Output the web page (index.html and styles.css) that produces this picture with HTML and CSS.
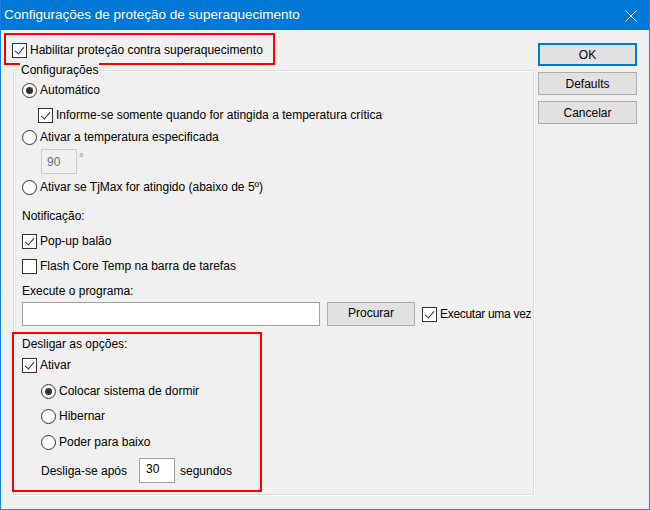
FILE: index.html
```html
<!DOCTYPE html>
<html>

<head>
    <meta charset="utf-8">
    <title>Configurações de proteção de superaquecimento</title>
    <meta name="viewport" content="width=device-width, initial-scale=1">
    <link rel="stylesheet" href="styles.css">
</head>

<body>
    <div class="window">
        <div class="titlebar">
            <span class="title-text">Configurações de proteção de superaquecimento</span>
            <svg class="close-icon" width="12" height="12" viewBox="0 0 12 12">
                <path d="M0.5 0.5 L11.5 11.5 M11.5 0.5 L0.5 11.5" stroke="#fff" stroke-width="1" />
            </svg>
        </div>

        <div class="content">
            <div class="left-col">
                <!-- main switch -->
                <div class="mark-box enable-box">
                    <label class="opt">
                        <span class="check on"></span>
                        Habilitar proteção contra superaquecimento
                    </label>
                </div>

                <div class="group">
                    <div class="group-title">Configurações</div>

                    <div class="row r-auto">
                        <span class="radio on"></span>Automático
                    </div>
                    <div class="row r-inform indent1">
                        <span class="check on"></span>Informe-se somente quando for atingida a temperatura crítica
                    </div>
                    <div class="row r-temp">
                        <span class="radio"></span>Ativar a temperatura especificada
                    </div>
                    <div class="row r-ninety indent2">
                        <span class="num-box disabled">90</span><span class="deg">°</span>
                    </div>
                    <div class="row r-tjmax">
                        <span class="radio"></span>Ativar se TjMax for atingido (abaixo de 5º)
                    </div>

                    <div class="row r-notif">Notificação:</div>
                    <div class="row r-popup">
                        <span class="check on"></span>Pop-up balão
                    </div>
                    <div class="row r-flash">
                        <span class="check"></span>Flash Core Temp na barra de tarefas
                    </div>

                    <div class="row r-exec">Execute o programa:</div>
                    <div class="row r-prog">
                        <span class="text-input"></span>
                        <span class="btn browse">Procurar</span>
                        <span class="check on"></span><span class="run-once">Executar uma vez</span>
                    </div>

                    <!-- shutdown options -->
                    <div class="mark-box shutdown-box">
                        <div class="row r-desl">Desligar as opções:</div>
                        <div class="row r-ativar">
                            <span class="check on"></span>Ativar
                        </div>
                        <div class="row r-sleep indent2">
                            <span class="radio on"></span>Colocar sistema de dormir
                        </div>
                        <div class="row r-hib indent2">
                            <span class="radio"></span>Hibernar
                        </div>
                        <div class="row r-power indent2">
                            <span class="radio"></span>Poder para baixo
                        </div>
                        <div class="row r-after indent2">
                            <span class="after-label">Desliga-se após</span>
                            <span class="num-box">30</span>
                            <span class="after-unit">segundos</span>
                        </div>
                    </div>
                </div>
            </div>

            <div class="right-col">
                <div class="btn side default">OK</div>
                <div class="btn side">Defaults</div>
                <div class="btn side">Cancelar</div>
            </div>
        </div>
    </div>
</body>

</html>
```

FILE: styles.css
```css
body {
    margin: 0;
    font-family: 'Liberation Sans', Arial, sans-serif;
    font-size: 12px;
    color: #000000;
}

.window {
    width: 650px;
    height: 510px;
    box-sizing: border-box;
    border: 1px solid #1883d7;
    border-top: none;
    background-color: #f0f0f0;
    overflow: hidden;
}

.titlebar {
    height: 30px;
    margin: 0 -1px;
    background-color: #0078d7;
    color: #ffffff;
    display: flex;
    align-items: center;
    justify-content: space-between;
    padding: 0 13px 0 4px;
}

.title-text {
    font-size: 13.5px;
    padding-bottom: 1px;
}

.close-icon {
    display: block;
    margin-top: 1px;
}

.content {
    display: flex;
    padding-left: 3px;
}

.left-col {
    width: 530px;
}

.mark-box {
    border: 2px solid #ff0000;
    box-sizing: border-box;
}

.enable-box {
    width: 271px;
    height: 32px;
    margin-top: 3px;
    padding: 2px 0 0 6px;
    display: flex;
    align-items: center;
}

.opt {
    display: flex;
    align-items: center;
}

/* group box */
.group {
    width: 521px;
    box-sizing: border-box;
    margin: 5px 0 0 9px;
    height: 425px;
    border: 1px solid #dcdcdc;
    box-shadow: inset 1px 1px 0 #ffffff, 1px 1px 0 #ffffff;
    padding-left: 8px;
}

.group-title {
    width: fit-content;
    height: 14px;
    line-height: 14px;
    margin: -8px 0 0 -2px;
    padding: 0 1px;
    background-color: #f0f0f0;
}

.row {
    display: flex;
    align-items: center;
    white-space: nowrap;
}

.indent1 {
    padding-left: 16px;
}

.indent2 {
    padding-left: 19px;
}

.r-auto { height: 22px; margin-top: 2px; }
.r-inform { height: 28px; }
.r-temp { height: 16px; }
.r-ninety { height: 25px; margin-top: 4px; }
.r-tjmax { height: 26px; }
.r-notif { height: 32px; }
.r-popup { height: 18px; }
.r-flash { height: 32px; }
.r-exec { height: 18px; }
.r-prog { height: 24px; margin-top: 2px; }
.r-desl { height: 20px; }
.r-ativar { height: 22px; }
.r-sleep { height: 30px; }
.r-hib { height: 20px; }
.r-power { height: 32px; }
.r-after { height: 25px; }

.run-once {
    letter-spacing: -0.3px;
}

.shutdown-box {
    width: 250px;
    height: 160px;
    margin: 6px 0 0 -10px;
    padding-left: 8px;
}

/* check boxes and radios */
.check {
    width: 13px;
    height: 13px;
    border: 1px solid #333333;
    background-color: #ffffff;
    margin-right: 3px;
    flex-shrink: 0;
    position: relative;
}

.check.on::after {
    content: "";
    position: absolute;
    left: 4px;
    top: 1px;
    width: 4px;
    height: 8px;
    border: solid #333333;
    border-width: 0 1px 1px 0;
    transform: rotate(40deg);
}

.radio {
    width: 13px;
    height: 13px;
    border: 1px solid #333333;
    border-radius: 50%;
    background-color: #ffffff;
    margin-right: 3px;
    flex-shrink: 0;
    display: flex;
    align-items: center;
    justify-content: center;
}

.radio.on::after {
    content: "";
    width: 7px;
    height: 7px;
    border-radius: 50%;
    background-color: #333333;
}

.num-box {
    width: 36px;
    height: 25px;
    box-sizing: border-box;
    border: 1px solid #a0a0a0;
    background-color: #ffffff;
    padding: 3px 0 0 6px;
    align-self: flex-start;
    flex-shrink: 0;
}

.num-box.disabled {
    background-color: #f0f0f0;
    border-color: #cccccc;
    color: #6d6d6d;
    padding: 5px 0 0 5px;
}

.deg {
    color: #8a8a8a;
    align-self: flex-start;
    margin: 2px 0 0 2px;
}

.text-input {
    width: 298px;
    height: 24px;
    box-sizing: border-box;
    border: 1px solid #a0a0a0;
    background-color: #ffffff;
    margin-right: 7px;
    flex-shrink: 0;
}

.btn {
    background-color: #e1e1e1;
    border: 1px solid #adadad;
    box-sizing: border-box;
    display: flex;
    align-items: center;
    justify-content: center;
}

.browse {
    width: 88px;
    height: 24px;
    margin-right: 7px;
    padding-bottom: 2px;
    flex-shrink: 0;
}

.after-label {
    width: 98px;
}

.after-unit {
    margin-left: 5px;
}

.right-col {
    margin-left: 4px;
    padding-top: 13px;
    display: flex;
    flex-direction: column;
    gap: 6px;
}

.side {
    width: 99px;
    height: 23px;
}

.side.default {
    border-color: #0078d7;
    box-shadow: inset 0 0 0 1px #0078d7;
}
```
